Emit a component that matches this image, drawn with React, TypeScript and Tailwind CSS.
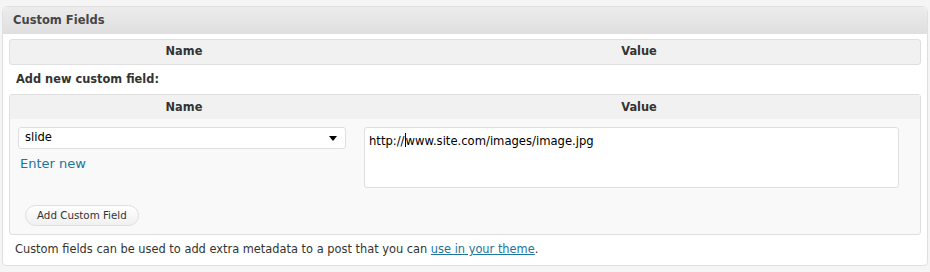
const font = { fontFamily: '"DejaVu Sans", Verdana, sans-serif' };

function HeadRow({ className = '' }: { className?: string }) {
  return (
    <div className={`grid grid-cols-[348px_1fr] text-[11.4px] font-bold text-[#333] ${className}`}>
      <div className="text-center">Name</div>
      <div className="text-center">Value</div>
    </div>
  );
}

export default function App() {
  return (
    <div className="h-[272px] w-[930px] bg-[#f5f5f5] px-[2px] pt-[6px]" style={font}>
      <div className="rounded-t-[6px] rounded-b-[4px] border border-[#dfdfdf] bg-white">
        <div className="flex h-[27px] items-center rounded-t-[6px] border-b border-[#dfdfdf] bg-gradient-to-b from-[#ececec] to-[#dfdfdf] px-[10px] pt-[1px] text-[11.5px] font-bold text-[#464646]">
          Custom Fields
        </div>

        <div className="px-[6px] pt-[5px]">
          <HeadRow className="h-[26px] items-center rounded-[3px] border border-[#dfdfdf] bg-[#f1f1f1]" />

          <div className="px-[7px] pt-[6px] pb-[6px] text-[11.4px] font-bold text-[#333]">Add new custom field:</div>

          <div className="rounded-[3px] border border-[#dfdfdf] bg-[#f9f9f9]">
            <HeadRow className="h-[24px] items-center bg-[#f1f1f1]" />
            <div className="flex gap-[18px] px-[8px] pt-[8px]">
              <div className="w-[328px]">
                <div className="flex h-[22px] items-center justify-between rounded-[3px] border border-[#dfdfdf] bg-white pl-[6px] pr-[8px] text-[11.6px] text-black">
                  <span>slide</span>
                  <svg width="8" height="5" viewBox="0 0 8 5">
                    <path d="M0 0h8L4 5z" fill="#000" />
                  </svg>
                </div>
                <a className="mt-[5px] block pl-[2px] text-[13px] text-[#21759b]">Enter new</a>
              </div>
              <div className="h-[61px] w-[535px] rounded-[3px] border border-[#dfdfdf] bg-white px-[4px] pt-[5px] text-[11.6px] text-black">
                http://<span className="inline-block h-[14px] w-px -mb-[2px] bg-black" />www.site.com/images/image.jpg
              </div>
            </div>
            <div className="px-[15px] pt-[14px] pb-[8px]">
              <button className="h-[21px] rounded-full border border-[#dfdfdf] bg-gradient-to-b from-white to-[#f0f0f0] px-[11px] text-[10.3px] text-[#333]">
                Add Custom Field
              </button>
            </div>
          </div>

          <div className="px-[6px] pt-[6px] pb-[7px] text-[11.4px] text-[#333]">
            Custom fields can be used to add extra metadata to a post that you can{' '}
            <a className="text-[#21759b] underline">use in your theme</a>.
          </div>
        </div>
      </div>
    </div>
  );
}
